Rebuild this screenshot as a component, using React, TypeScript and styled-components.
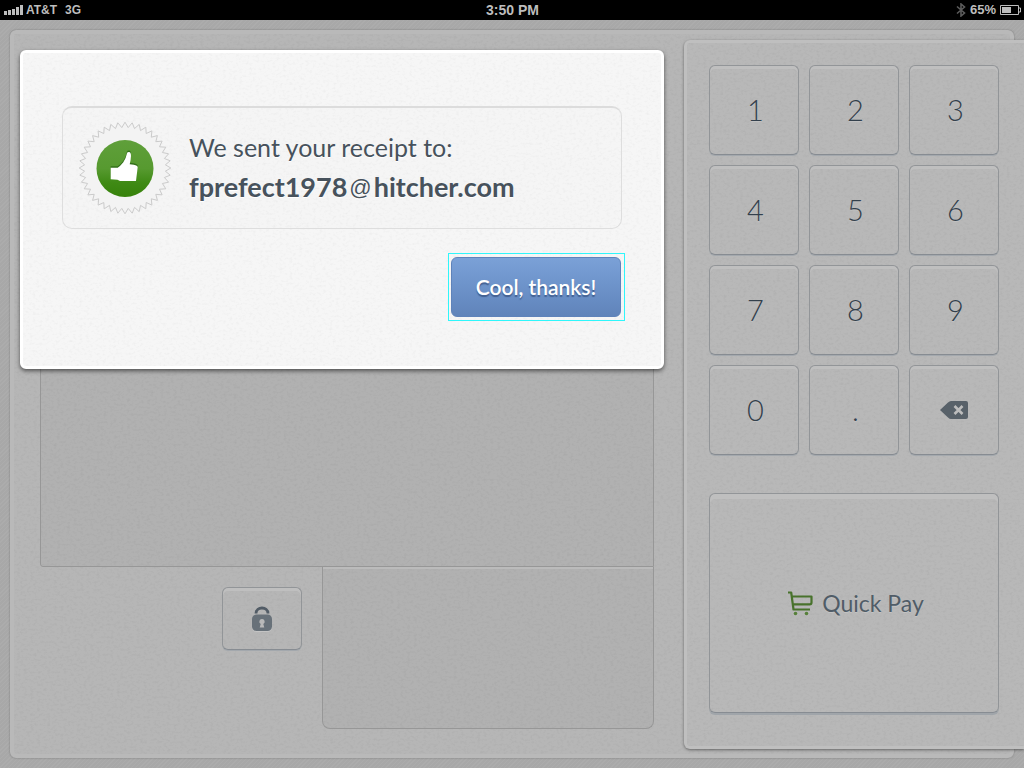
import React from "react";
import styled, { createGlobalStyle } from "styled-components";

const GlobalStyle = createGlobalStyle`
  *, *::before, *::after { box-sizing: border-box; }
  body { margin: 0; background: #a8a8a8; }
  button { font: inherit; color: inherit; cursor: pointer; }
`;

const Screen = styled.div`
  display: flex;
  flex-direction: column;
  min-height: 100vh;
  overflow: hidden;
  font-family: Lato, "Open Sans", sans-serif;
  color: #4b5661;
`;

/* ---------- status bar ---------- */

const StatusBar = styled.header`
  display: grid;
  grid-template-columns: 1fr auto 1fr;
  align-items: center;
  height: 20px;
  padding: 0 3px 0 4px;
  background: #000;
  color: #bdbdbd;
  font: bold 13px/20px "Liberation Sans", sans-serif;
`;

const StatusGroup = styled.div<{ $end?: boolean }>`
  display: flex;
  align-items: center;
  justify-content: ${(p) => (p.$end ? "flex-end" : "flex-start")};
  gap: ${(p) => (p.$end ? "4px" : "3px")};
`;

const Carrier = styled.div`
  display: flex;
  gap: 8px;
  font-size: 12px;
`;

const Clock = styled.time`
  font-size: 14px;
`;

/* ---------- register ---------- */

const Stage = styled.main`
  position: relative;
  flex: 1;
  display: grid;
  grid-template-columns: minmax(0, 1fr) 340px;
  background: repeating-linear-gradient(135deg, #acacac 0 1px, #a8a8a8 1px 3px);
`;

const Sheet = styled.div`
  position: relative;
  grid-area: 1 / 1 / 2 / 3;
  margin: 10px;
  border: 4px solid #b9b9b9;
  border-radius: 6px;
  background: #b6b6b6;
  box-shadow: 0 0 2px rgba(0, 0, 0, 0.3);
`;

const GrainLayer = styled.svg`
  position: absolute;
  inset: 0;
  width: 100%;
  height: 100%;
  pointer-events: none;
`;

const Sale = styled.section`
  position: relative;
  grid-area: 1 / 1 / 2 / 2;
  display: flex;
  flex-direction: column;
  padding: 40px 30px 39px 40px;
`;

const ItemList = styled.div`
  flex: 1;
  border: 1px solid #979797;
  border-radius: 4px 4px 0 3px;
  background: rgba(0, 0, 0, 0.025);
`;

const SaleFooter = styled.div`
  display: flex;
  justify-content: flex-end;
  align-items: flex-start;
  gap: 20px;
`;

const Total = styled.div`
  width: 332px;
  height: 162px;
  border: 1px solid #979797;
  border-top: 0;
  border-radius: 0 0 8px 8px;
  background: rgba(0, 0, 0, 0.025);
  box-shadow: inset 0 2px 0 #bbb;
`;

const Key = styled.button`
  display: flex;
  align-items: center;
  justify-content: center;
  padding: 0;
  border: 1px solid #929598;
  border-bottom-color: #878c92;
  border-radius: 6px;
  background: transparent;
  box-shadow: inset 0 3px 0 #bfbfbf, 0 1px 0 #a3a8ad;
`;

const LockKey = styled(Key)`
  width: 80px;
  height: 63px;
  margin-top: 20px;
`;

const Keypad = styled.section`
  position: relative;
  grid-area: 1 / 2 / 2 / 3;
  display: flex;
  flex-direction: column;
  gap: 38px;
  margin: 20px 0 19px;
  padding: 22px 25px 33px 22px;
  border: 3px solid #bfbfbf;
  border-right: 0;
  border-radius: 6px 0 0 6px;
  background: #b8b8b8;
  box-shadow: 0 1px 3px rgba(0, 0, 0, 0.45);
`;

const Keys = styled.div`
  position: relative;
  display: grid;
  grid-template-columns: repeat(3, 1fr);
  grid-auto-rows: 90px;
  gap: 10px;
`;

const DigitKey = styled(Key)`
  padding-left: 3px;
  font-size: 29px;
  font-weight: 300;
  line-height: 34px;
  color: #33404c;
  text-shadow: 0 1px 0 #c2c2c2;
`;

const QuickPay = styled(Key)`
  position: relative;
  flex: 1;
  gap: 9px;
  min-height: 120px;
  padding-left: 4px;
  font-size: 23px;
  line-height: 28px;
  color: #505c67;
  text-shadow: 0 1px 0 #c4c4c4;
  box-shadow: inset 0 5px 0 #bfbfbf, 0 2px 0 #a0a5aa;
`;

/* ---------- receipt dialog ---------- */

const Dialog = styled.section`
  position: absolute;
  top: 30px;
  left: 20px;
  right: 360px;
  display: flex;
  flex-direction: column;
  align-items: flex-end;
  gap: 28px;
  padding: 53px 39px 49px;
  border: 3px solid #fff;
  border-radius: 6px;
  background: #f6f6f6;
  box-shadow: 0 2px 4px rgba(0, 0, 0, 0.55);
`;

const Receipt = styled.div`
  position: relative;
  display: flex;
  align-items: center;
  gap: 18px;
  align-self: stretch;
  height: 123px;
  padding: 0 16px;
  border: 1px solid #dedede;
  border-top: 2px solid #dcdcdc;
  border-radius: 10px;
  background: rgba(0, 0, 0, 0.005);
`;

const Message = styled.p`
  margin: 0;
  padding-bottom: 3px;
  font-size: 25px;
  line-height: 40px;
  color: #47525c;
  text-shadow: 0 1px 0 #fff;
`;

const Address = styled.strong`
  display: block;
  font-size: 27px;
  font-weight: 700;
`;

const AtSign = styled.span`
  margin: 0 2px;
  font: 22px/30px "Liberation Sans", sans-serif;
  vertical-align: 2px;
`;

const Confirm = styled.button`
  position: relative;
  width: 170px;
  height: 60px;
  margin-right: 1px;
  padding: 0;
  border: 1px solid #5f83ba;
  border-radius: 6px;
  background: linear-gradient(#7ba1d7, #6e94cb 45%, #6084ba);
  color: #fff;
  font-size: 21px;
  font-weight: 600;
  line-height: 26px;
  text-shadow: 0 2px 1px rgba(40, 65, 110, 0.6);

  &::after {
    content: "";
    position: absolute;
    inset: -5px -5px -5px -4px;
    border: 1px solid #2ff6fb;
  }
`;

/* ---------- drawings ---------- */

const Grain = ({ id, opacity }: { id: string; opacity: number }) => (
  <GrainLayer aria-hidden="true">
    <filter id={id} x="0" y="0" width="100%" height="100%">
      <feTurbulence type="fractalNoise" baseFrequency="0.3 0.4" numOctaves="3" seed="8" />
      <feColorMatrix values="0 0 0 0 0  0 0 0 0 0  0 0 0 0 0  2 0 0 0 -0.9" />
    </filter>
    <rect width="100%" height="100%" filter={`url(#${id})`} opacity={opacity} />
  </GrainLayer>
);

const SignalIcon = () => (
  <svg width="19" height="10" fill="#bdbdbd" aria-hidden="true">
    <path d="M0 6h3v4H0zM4 5h3v5H4zM8 4h3v6H8zM12 2h3v8h-3zM16 0h3v10h-3z" />
  </svg>
);

const BluetoothIcon = () => (
  <svg width="10" height="14" fill="none" stroke="#5c5c5c" strokeWidth="1.6" aria-hidden="true">
    <path d="M1 3.500l7.500 6.500L5 13V1l3.500 3L1 10.500" />
  </svg>
);

const BatteryIcon = () => (
  <svg width="21" height="10" aria-hidden="true">
    <path d="M.5.5h18v9H.5zM18.500 3h2v4h-2" fill="none" stroke="#bdbdbd" />
    <path d="M2 2h9v6H2z" fill="#bdbdbd" />
  </svg>
);

const TEETH = 40;
const sealPoints = Array.from({ length: TEETH * 2 }, (_, i) => {
  const radius = i % 2 ? 40.5 : 45.8;
  const angle = (Math.PI * i) / TEETH;
  return `${(46 + radius * Math.cos(angle)).toFixed(1)},${(46 + radius * Math.sin(angle)).toFixed(1)}`;
}).join(" ");

const THUMB =
  "M31.700 45.700h7Q41 44.500 44.300 40.300 47 36.500 48 31.300q.2-1.300 2-1.300 2 0 2 4 0 3-1.300 8.300l4 .4q4 .6 4 2.600L57 59H41l-2.500-1.200-6.800-.5z";

const ThumbSeal = () => (
  <svg width="92" height="92" viewBox="0 0 92 92" aria-hidden="true">
    <defs>
      <linearGradient id="seal-green" x2="0" y2="1">
        <stop offset="0" stopColor="#5f9f3a" />
        <stop offset=".5" stopColor="#579a30" />
        <stop offset=".75" stopColor="#3f8a15" />
        <stop offset="1" stopColor="#37820b" />
      </linearGradient>
    </defs>
    <polygon points={sealPoints} fill="#f3f3f3" stroke="#cbcbcb" />
    <circle cx="46" cy="46.500" r="28.500" fill="url(#seal-green)" />
    <path d={THUMB} fill="#33701a" transform="translate(0 -1.500)" />
    <path d={THUMB} fill="#fff" />
  </svg>
);

const LockIcon = () => (
  <svg width="20" height="26" viewBox="0 0 20 26" aria-hidden="true">
    <path d="M4 7.500C4 3.500 7 2 10 2s6 1.500 6 5.500" fill="none" stroke="#525c66" strokeWidth="2.800" />
    <rect y="9.500" width="20" height="16.500" rx="4.500" fill="#c4c4c4" />
    <rect y="8.500" width="20" height="16.500" rx="4.500" fill="#687179" />
    <path d="M10 13a2.600 2.600 0 0 1 1.300 4.900l1 3.600H7.700l1-3.600A2.600 2.600 0 0 1 10 13z" fill="#b9b9b9" />
  </svg>
);

const DeleteIcon = () => (
  <svg width="28" height="18" viewBox="0 0 28 18" aria-hidden="true">
    <path d="M0 9l8-7.500Q9.500 0 11 0h15q2 0 2 2v14q0 2-2 2H11q-1.500 0-3-1.500z" fill="#586169" />
    <path d="M14.500 5l8 8m0-8l-8 8" stroke="#bdbdbd" strokeWidth="2.600" />
  </svg>
);

const CartIcon = () => (
  <svg width="25" height="25" viewBox="0 0 25 25" aria-hidden="true">
    <path d="M0 1.500h3.200L5.500 18.500H22M4 5.500h19.500v6q0 1.800-1.800 1.800H5" fill="none" stroke="#48722c" strokeWidth="2.200" strokeLinejoin="round" />
    <circle cx="7.500" cy="22.500" r="1.800" fill="#56803a" />
    <circle cx="18.500" cy="22.500" r="1.800" fill="#56803a" />
  </svg>
);

const DIGITS = ["1", "2", "3", "4", "5", "6", "7", "8", "9", "0", "."];

export default function App() {
  return (
    <Screen>
      <GlobalStyle />
      <StatusBar>
        <StatusGroup>
          <SignalIcon />
          <Carrier>
            <span>AT&amp;T</span>
            <span>3G</span>
          </Carrier>
        </StatusGroup>
        <Clock>3:50 PM</Clock>
        <StatusGroup $end>
          <BluetoothIcon />
          <span>65%</span>
          <BatteryIcon />
        </StatusGroup>
      </StatusBar>

      <Stage>
        <Sheet>
          <Grain id="grain-sheet" opacity={0.04} />
        </Sheet>

        <Sale>
          <ItemList />
          <SaleFooter>
            <LockKey aria-label="Lock">
              <LockIcon />
            </LockKey>
            <Total />
          </SaleFooter>
        </Sale>

        <Keypad>
          <Grain id="grain-keypad" opacity={0.04} />
          <Keys>
            {DIGITS.map((digit) => (
              <DigitKey key={digit}>{digit}</DigitKey>
            ))}
            <Key aria-label="Delete">
              <DeleteIcon />
            </Key>
          </Keys>
          <QuickPay>
            <CartIcon />
            Quick Pay
          </QuickPay>
        </Keypad>

        <Dialog role="dialog" aria-label="Receipt sent">
          <Grain id="grain-dialog" opacity={0.03} />
          <Receipt>
            <ThumbSeal />
            <Message>
              We sent your receipt to:
              <Address>
                fprefect1978<AtSign>@</AtSign>hitcher.com
              </Address>
            </Message>
          </Receipt>
          <Confirm>Cool, thanks!</Confirm>
        </Dialog>
      </Stage>
    </Screen>
  );
}
